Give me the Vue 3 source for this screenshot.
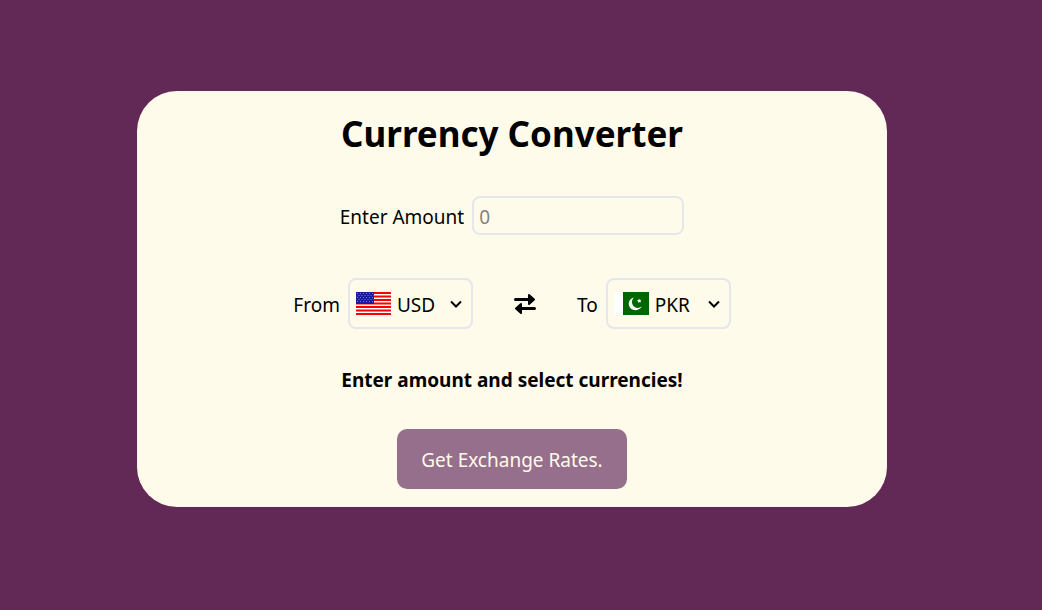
<script setup>
import { ref } from 'vue'

const amount = ref('')
const from = ref('USD')
const to = ref('PKR')

function swap() {
  const previous = from.value
  from.value = to.value
  to.value = previous
}
</script>

<template>
  <main class="page">
    <form class="card" @submit.prevent>
      <h1 class="title">Currency Converter</h1>

      <div class="amount">
        <label for="amount">Enter Amount</label>
        <input id="amount" v-model="amount" class="amount-input" type="text" inputmode="decimal" placeholder="0" />
      </div>

      <div class="currencies">
        <div class="field">
          <label for="from">From</label>
          <div class="picker">
            <select id="from" v-model="from" class="select">
              <option>USD</option>
              <option>PKR</option>
            </select>
            <svg v-if="from === 'USD'" class="flag" viewBox="0 0 35 23" aria-hidden="true">
              <rect width="35" height="23" fill="#fff" />
              <path d="M0 1H35M0 4.500H35M0 8H35M0 11.500H35M0 15H35M0 18.500H35M0 22H35" stroke="#f00" stroke-width="2" />
              <rect width="18" height="12" fill="#1a1a9c" />
              <path d="M1 1.500H18M1 5.500H18M1 9.500H18" stroke="#7a7ac8" stroke-dasharray="1 2" />
              <path d="M2.500 3.500H18M2.500 7.500H18" stroke="#7a7ac8" stroke-dasharray="1 2" />
            </svg>
            <svg v-else class="flag" viewBox="0 0 35 23" aria-hidden="true">
              <rect width="35" height="23" fill="#fff" />
              <rect x="9" width="26" height="23" fill="#060" />
              <path d="M20 5.500C16 6.500 14 10 15 13.500C16.300 18.500 23.500 20.500 28 14.500C24.500 17 20 16 18.500 12.500C17.400 10 18 7.500 20 5.500Z" fill="#fff" />
            </svg>
            <svg class="chevron" viewBox="0 0 12 8" aria-hidden="true">
              <path d="M1 1.500L6 6.500L11 1.500" fill="none" stroke="#000" stroke-width="2" />
            </svg>
          </div>
        </div>

        <button class="swap" type="button" aria-label="Swap currencies" @click="swap">
          <svg viewBox="0 0 22 20" aria-hidden="true">
            <path d="M1.500 5.500H15M7 14.500H20.500" stroke="#000" stroke-width="3" stroke-linecap="round" />
            <path d="M15 1L20 5.500L15 10ZM7 10L2 14.500L7 19Z" stroke="#000" stroke-width="2" stroke-linejoin="round" />
          </svg>
        </button>

        <div class="field">
          <label for="to">To</label>
          <div class="picker">
            <select id="to" v-model="to" class="select">
              <option>USD</option>
              <option>PKR</option>
            </select>
            <svg v-if="to === 'PKR'" class="flag" viewBox="0 0 35 23" aria-hidden="true">
              <rect width="35" height="23" fill="#fff" />
              <rect x="9" width="26" height="23" fill="#060" />
              <path d="M20 5.500C16 6.500 14 10 15 13.500C16.300 18.500 23.500 20.500 28 14.500C24.500 17 20 16 18.500 12.500C17.400 10 18 7.500 20 5.500Z" fill="#fff" />
              <path d="M25 6.500L25.800 7.900L27.500 7.700L26.400 9L27 10.500L25.400 9.900L24.100 11L24.200 9.300L22.800 8.400L24.500 8Z" fill="#fff" />
            </svg>
            <svg v-else class="flag" viewBox="0 0 35 23" aria-hidden="true">
              <rect width="35" height="23" fill="#fff" />
              <path d="M0 1H35M0 4.500H35M0 8H35M0 11.500H35M0 15H35M0 18.500H35M0 22H35" stroke="#f00" stroke-width="2" />
              <rect width="18" height="12" fill="#1a1a9c" />
            </svg>
            <svg class="chevron" viewBox="0 0 12 8" aria-hidden="true">
              <path d="M1 1.500L6 6.500L11 1.500" fill="none" stroke="#000" stroke-width="2" />
            </svg>
          </div>
        </div>
      </div>

      <p class="message">Enter amount and select currencies!</p>
      <button class="submit" type="submit">Get Exchange Rates.</button>
    </form>
  </main>
</template>

<style>
body {
  background: #632956;
}
</style>

<style scoped>
.page {
  box-sizing: border-box;
  min-height: 100vh;
  padding: 0 18px 12px 0;
  display: flex;
  align-items: center;
  justify-content: center;
  color: #000;
  font-family: "Noto Sans", sans-serif;
  font-size: 19px;
  line-height: 28px;
}

.card {
  box-sizing: border-box;
  width: 100%;
  max-width: 750px;
  padding: 18px 24px;
  border-radius: 40px;
  background: #fffbeb;
  display: flex;
  flex-direction: column;
  align-items: center;
}

.title {
  margin: 0 0 37px;
  font-size: 35px;
  line-height: 50px;
  font-weight: 700;
}

.amount {
  display: flex;
  align-items: center;
  gap: 8px;
  margin-bottom: 43px;
}

.amount-input {
  box-sizing: border-box;
  width: 212px;
  height: 39px;
  padding: 2px 5px 0;
  border: 2px solid #e5e7eb;
  border-radius: 8px;
  background: transparent;
  color: inherit;
  font: inherit;
}

.amount-input::placeholder {
  color: #85827b;
}

.currencies {
  display: flex;
  align-items: center;
  gap: 41px;
  margin-bottom: 37px;
}

.field {
  display: flex;
  align-items: center;
  gap: 8px;
}

.amount label,
.field label {
  padding-top: 2px;
}

.picker {
  position: relative;
}

.select {
  display: block;
  box-sizing: border-box;
  width: 125px;
  height: 51px;
  padding: 2px 28px 0 47px;
  border: 2px solid #e5e7eb;
  border-radius: 8px;
  appearance: none;
  background: transparent;
  color: inherit;
  font: inherit;
}

.flag,
.chevron {
  position: absolute;
  pointer-events: none;
}

.flag {
  left: 8px;
  top: 14px;
  width: 35px;
  height: 23px;
}

.chevron {
  right: 11px;
  top: 22px;
  width: 12px;
  height: 8px;
}

.swap {
  padding: 0;
  border: 0;
  background: none;
  cursor: pointer;
}

.swap svg {
  display: block;
  width: 22px;
  height: 20px;
}

.message {
  margin: 0 0 35px;
  font-weight: 700;
}

.submit {
  height: 60px;
  padding: 2px 24px 0;
  border: 0;
  border-radius: 10px;
  background: #966f8c;
  color: #fffbeb;
  font: inherit;
}
</style>
